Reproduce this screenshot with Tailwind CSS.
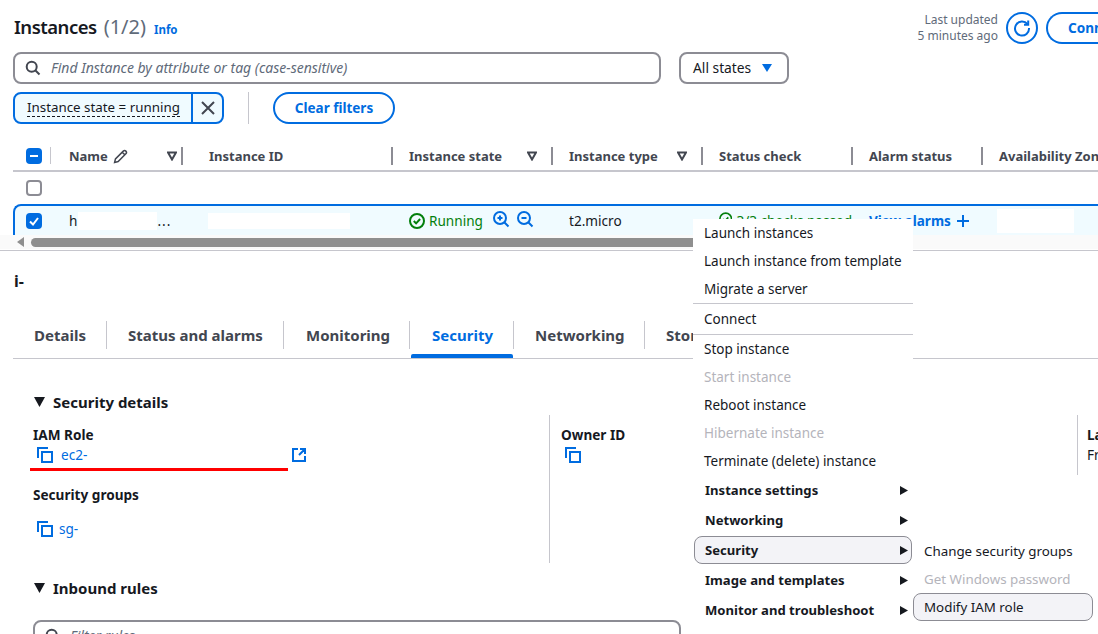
<!DOCTYPE html>
<html lang="en">
<head>
<meta charset="utf-8">
<title>Instances</title>
<script src="https://cdn.jsdelivr.net/npm/@tailwindcss/browser@4"></script>
</head>
<body class="bg-white">
<div class="relative w-[1098px] h-[634px] overflow-hidden bg-white font-['Noto_Sans',sans-serif] text-[14px] leading-[20px] text-[#16191f]">

  <!-- Header -->
  <header class="h-[52px] pl-[14px] flex items-start justify-between">
    <div class="flex items-baseline mt-[13px]">
      <h1 class="text-[18.5px] leading-[28px] font-semibold tracking-[-0.5px] text-[#16191f]">Instances</h1>
      <span class="text-[20px] leading-[28px] text-[#5f6b7a] ml-[7px]">(1/2)</span>
      <a class="text-[11.5px] font-bold text-[#006ce0] ml-[8px]">Info</a>
    </div>
    <div class="flex items-center mt-[12px] w-[178px] shrink-0 justify-end">
      <div class="text-right text-[12px] leading-[16px] text-[#5f6b7a] whitespace-nowrap">Last updated<br>5 minutes ago</div>
      <button class="ml-[8px] w-[32px] h-[32px] rounded-full border-2 border-[#006ce0] flex items-center justify-center shrink-0">
        <svg width="18" height="18" viewBox="0 0 18 18" fill="none" stroke="#006ce0" stroke-width="2"><path d="M14.500 5.200A7 7 0 1 0 16 9"/><path d="M15.200 1.500v4.200h-4.200"/></svg>
      </button>
      <button class="ml-[8px] w-[60px] h-[32px] -mr-[8px] rounded-l-full border-2 border-r-0 border-[#006ce0] text-left pl-[20px] font-bold text-[#006ce0] text-[13.6px] overflow-hidden whitespace-nowrap shrink-0">Connect</button>
    </div>
  </header>

  <!-- Search -->
  <div class="flex items-center pl-[13px] gap-[18px]">
    <div class="w-[648px] h-[32px] rounded-[8px] border-2 border-[#8c8c94] flex items-center pl-[10px]">
      <svg width="16" height="16" viewBox="0 0 16 16" fill="none" stroke="#424650" stroke-width="2"><circle cx="6.700" cy="6.700" r="5"/><path d="M10.500 10.500l4 4"/></svg>
      <span class="ml-[10px] italic text-[#5f6b7a] text-[14px]">Find Instance by attribute or tag (case-sensitive)</span>
    </div>
    <div class="w-[110px] h-[32px] rounded-[8px] border-2 border-[#8c8c94] flex items-center pl-[12px]">
      <span class="text-[#16191f] text-[13.8px]">All states</span>
      <svg class="ml-[10px]" width="12" height="10" viewBox="0 0 12 10"><path d="M1 1h10L6 9z" fill="#006ce0"/></svg>
    </div>
  </div>

  <!-- Filters -->
  <div class="flex items-center pl-[13px] mt-[8px] h-[32px]">
    <div class="w-[211px] h-[32px] rounded-[8px] border-2 border-[#006ce0] bg-[#f0fbff] flex">
      <div class="w-[178px] border-r-2 border-[#006ce0] pl-[12px] flex items-center">
        <span class="border-b border-dashed border-[#16191f] leading-[17px] text-[13.35px] whitespace-nowrap">Instance state = running</span>
      </div>
      <div class="flex-1 flex items-center justify-center">
        <svg width="14" height="14" viewBox="0 0 14 14" stroke="#424650" stroke-width="2"><path d="M1 1l12 12M13 1L1 13"/></svg>
      </div>
    </div>
    <div class="w-px h-[32px] bg-[#c6c6cd] ml-[24px]"></div>
    <button class="ml-[24px] w-[122px] h-[32px] rounded-full border-2 border-[#006ce0] font-bold text-[#006ce0] text-[13.5px]">Clear filters</button>
  </div>

  <!-- Table -->
  <div class="ml-[13px] mt-[16px]">
    <div class="grid grid-cols-[38px_130px_210px_160px_150px_150px_130px_150px] h-[32px] pt-[2px] border-b-2 border-[#c6c6cd] items-center font-bold text-[#424650] text-[13px] whitespace-nowrap">
      <div class="flex items-center pl-[13px] h-[28px] relative">
        <div class="w-[16px] h-[16px] rounded-[4px] bg-[#006ce0] flex items-center justify-center"><div class="w-[8px] h-[2px] bg-white"></div></div>
        <div class="absolute right-0 top-[5px] w-px h-[17px] bg-[#c6c6cd]"></div>
      </div>
      <div class="flex items-center h-[18px] pl-[18px]">
        <span>Name</span>
        <svg class="ml-[5px]" width="15" height="15" viewBox="0 0 14 14" fill="none" stroke="#424650" stroke-width="1.4"><path d="M1.500 12.500l.8-3.300L9.600 2a1.600 1.600 0 0 1 2.400 2.400L4.800 11.700zM8.600 3l2.400 2.400"/></svg>
        <svg class="ml-auto mr-[4px]" width="10" height="10" viewBox="0 0 10 10" fill="none" stroke="#424650" stroke-width="2"><path d="M1 1.500h8L5 8.500z"/></svg>
      </div>
      <div class="h-[18px] flex items-center pl-[26px] border-l-2 border-[#8c8c94]">Instance ID</div>
      <div class="h-[18px] flex items-center pl-[16px] pr-[14px] border-l-2 border-[#8c8c94]">Instance state
        <svg class="ml-auto" width="10" height="10" viewBox="0 0 10 10" fill="none" stroke="#424650" stroke-width="2"><path d="M1 1.500h8L5 8.500z"/></svg>
      </div>
      <div class="h-[18px] flex items-center pl-[16px] pr-[14px] border-l-2 border-[#8c8c94]">Instance type
        <svg class="ml-auto" width="10" height="10" viewBox="0 0 10 10" fill="none" stroke="#424650" stroke-width="2"><path d="M1 1.500h8L5 8.500z"/></svg>
      </div>
      <div class="h-[18px] flex items-center pl-[16px] border-l-2 border-[#8c8c94]">Status check</div>
      <div class="h-[18px] flex items-center pl-[16px] border-l-2 border-[#8c8c94]">Alarm status</div>
      <div class="h-[18px] flex items-center pl-[16px] border-l-2 border-[#8c8c94]">Availability Zone</div>
    </div>
    <div class="h-[32px] flex items-center pl-[13px]">
      <div class="w-[16px] h-[16px] rounded-[4px] border-2 border-[#8c8c94]"></div>
    </div>
    <div class="h-[31px] grid grid-cols-[36px_131px_210px_160px_150px_150px_130px_150px] items-center bg-[#f0fbff] border-t-2 border-l-2 border-[#006ce0] rounded-tl-[8px] whitespace-nowrap text-[13.6px]">
      <div class="pl-[11px]">
        <div class="w-[16px] h-[16px] rounded-[4px] bg-[#006ce0] flex items-center justify-center">
          <svg width="12" height="12" viewBox="0 0 12 12" fill="none" stroke="#fff" stroke-width="2"><path d="M2 6.500l3 3L10 3"/></svg>
        </div>
      </div>
      <div class="pl-[18px] flex items-center"><span>h</span><span class="w-[79px] h-[18px] bg-white ml-[1px]"></span><span class="tracking-[1px]">...</span></div>
      <div class="pl-[26px]"><div class="w-[142px] h-[16px] bg-white"></div></div>
      <div class="pl-[17px] flex items-center text-[#037f0c]">
        <svg width="16" height="16" viewBox="0 0 16 16" fill="none" stroke="#037f0c" stroke-width="2"><circle cx="8" cy="8" r="7"/><path d="M4.800 8l2.300 2.400 4-4.400"/></svg>
        <span class="ml-[4px] mt-[1px]">Running</span>
        <svg class="ml-[10px] -mt-[3px]" width="17" height="17" viewBox="0 0 17 17" fill="none" stroke="#006ce0" stroke-width="2"><circle cx="7" cy="7" r="6"/><path d="M11.500 11.500l4 4M4.500 7h5M7 4.500v5"/></svg>
        <svg class="ml-[7px] -mt-[3px]" width="17" height="17" viewBox="0 0 17 17" fill="none" stroke="#006ce0" stroke-width="2"><circle cx="7" cy="7" r="6"/><path d="M11.500 11.500l4 4M4.500 7h5"/></svg>
      </div>
      <div class="pl-[17px]">t2.micro</div>
      <div class="pl-[17px] flex items-center text-[#037f0c]">
        <svg class="-mt-[3px]" width="16" height="16" viewBox="0 0 16 16" fill="none" stroke="#037f0c" stroke-width="2"><circle cx="8" cy="8" r="7"/><path d="M4.800 8l2.300 2.400 4-4.400"/></svg>
        <span class="ml-[4px]">3/3 checks passed</span>
      </div>
      <div class="pl-[17px] flex items-center font-bold text-[#006ce0] text-[13.5px]">
        <span>View alarms</span>
        <svg class="ml-[6px]" width="12" height="12" viewBox="0 0 12 12" stroke="#006ce0" stroke-width="2"><path d="M0 6h12M6 0v12"/></svg>
      </div>
      <div class="pl-[15px]"><div class="w-[77px] h-[24px] bg-white"></div></div>
    </div>
    <!-- scrollbar -->
    <div class="h-[14px] -ml-[13px] pl-[17px] flex items-center bg-[#fafafa]">
      <svg width="8" height="10" viewBox="0 0 8 10"><path d="M7 0v10L0 5z" fill="#8f8f8f"/></svg>
      <div class="ml-[6px] w-[800px] h-[9px] rounded-full bg-[#8f8f8f]"></div>
    </div>
  </div>
  <div class="h-px mt-[1px] bg-[#c6c6cd]"></div>

  <!-- Detail panel -->
  <div class="pl-[14px] mt-[20px] h-[20px] flex items-center font-bold text-[16px] leading-[20px]">i-</div>

  <nav class="ml-[13px] mt-[24px] h-[44px] border-b border-[#c6c6cd] flex text-[#424650] font-bold text-[15px] whitespace-nowrap">
    <div class="h-[28px] mt-[6px] flex items-center w-[94px] pl-[21px] border-r border-[#c6c6cd] self-start">Details</div>
    <div class="h-[28px] mt-[6px] flex items-center w-[177px] pl-[21px] border-r border-[#c6c6cd] self-start">Status and alarms</div>
    <div class="h-[28px] mt-[6px] flex items-center w-[126px] pl-[22px] border-r border-[#c6c6cd] self-start">Monitoring</div>
    <div class="relative h-[43px] w-[104px] self-start">
      <div class="h-[28px] mt-[6px] flex items-center pl-[22px] border-r border-[#c6c6cd] text-[#006ce0]">Security</div>
      <div class="absolute left-[1px] right-[1px] bottom-0 h-[4px] rounded-t-[2px] bg-[#006ce0]"></div>
    </div>
    <div class="h-[28px] mt-[6px] flex items-center w-[131px] pl-[21px] border-r border-[#c6c6cd] self-start">Networking</div>
    <div class="h-[28px] mt-[6px] flex items-center pl-[21px] self-start">Storage</div>
  </nav>

  <section class="pl-[33px] mt-[33px]">
    <h2 class="h-[20px] flex items-center font-bold text-[15px]">
      <svg width="13" height="10" viewBox="0 0 13 10"><path d="M1 0h11L6.500 10z" fill="#16191f"/></svg>
      <span class="ml-[7px]">Security details</span>
    </h2>
    <div class="flex mt-[3px] h-[148px]">
      <div class="w-[517px] shrink-0 border-r border-[#c6c6cd] pt-[10px] relative">
        <div class="font-bold text-[13.6px] leading-[20px]">IAM Role</div>
        <div class="flex items-center h-[20px] text-[#006ce0] text-[13.6px] relative">
          <svg class="ml-[4px]" width="16" height="16" viewBox="0 0 16 16" fill="none" stroke="#006ce0" stroke-width="2"><path d="M1 11V1h10"/><rect x="5" y="5" width="10" height="10"/></svg>
          <span class="ml-[8px]">ec2-</span>
          <svg class="absolute left-[259px] top-[3px]" width="14" height="14" viewBox="0 0 14 14" fill="none" stroke="#006ce0" stroke-width="2"><path d="M6 1H1v12h12V8M8 1h5v5M13 1L7 7"/></svg>
        </div>
        <div class="absolute left-[-3px] top-[53px] w-[258px] h-[3px] bg-[#ff0000]"></div>
        <div class="font-bold text-[13.6px] leading-[20px] mt-[20px]">Security groups</div>
        <div class="flex items-center h-[20px] mt-[14px] text-[#006ce0] text-[13.6px]">
          <svg class="ml-[4px]" width="16" height="16" viewBox="0 0 16 16" fill="none" stroke="#006ce0" stroke-width="2"><path d="M1 11V1h10"/><rect x="5" y="5" width="10" height="10"/></svg>
          <span class="ml-[6px]">sg-</span>
        </div>
      </div>
      <div class="pl-[11px] w-[527px] shrink-0 h-[60px] pt-[10px]">
        <div class="font-bold text-[13.6px] leading-[20px]">Owner ID</div>
        <svg class="ml-[4px] mt-[2px]" width="16" height="16" viewBox="0 0 16 16" fill="none" stroke="#006ce0" stroke-width="2"><path d="M1 11V1h10"/><rect x="5" y="5" width="10" height="10"/></svg>
      </div>
      <div class="border-l border-[#c6c6cd] h-[60px] pl-[9px] pt-[10px] whitespace-nowrap text-[13.6px] leading-[20px]">
        <div class="font-bold">Launch</div><div>From</div>
      </div>
    </div>
    <h2 class="mt-[15px] h-[20px] flex items-center font-bold text-[15px]">
      <svg width="13" height="10" viewBox="0 0 13 10"><path d="M1 0h11L6.500 10z" fill="#16191f"/></svg>
      <span class="ml-[7px]">Inbound rules</span>
    </h2>
    <div class="mt-[22px] w-[648px] h-[32px] rounded-[8px] border-2 border-[#8c8c94] flex items-center pl-[10px]">
      <svg width="16" height="16" viewBox="0 0 16 16" fill="none" stroke="#424650" stroke-width="2"><circle cx="6.700" cy="6.700" r="5"/><path d="M10.500 10.500l4 4"/></svg>
      <span class="ml-[9px] italic text-[#5f6b7a] text-[14px]">Filter rules</span>
    </div>
  </section>

  <!-- Actions context menu -->
  <div class="absolute left-[693px] top-[219px] w-[220px] h-[415px] bg-white text-[13.5px] text-[#16191f] whitespace-nowrap">
    <div class="h-[28px] pl-[11px] flex items-center">Launch instances</div>
    <div class="h-[28px] pl-[11px] flex items-center">Launch instance from template</div>
    <div class="h-[29px] pl-[11px] flex items-center border-b border-[#c6c6cd]">Migrate a server</div>
    <div class="h-[31px] pl-[11px] flex items-center border-b border-[#c6c6cd]">Connect</div>
    <div class="h-[28px] pl-[11px] flex items-center">Stop instance</div>
    <div class="h-[28px] pl-[11px] flex items-center text-[#b4b4bb]">Start instance</div>
    <div class="h-[28px] pl-[11px] flex items-center">Reboot instance</div>
    <div class="h-[28px] pl-[11px] flex items-center text-[#b4b4bb]">Hibernate instance</div>
    <div class="h-[28px] pl-[11px] flex items-center">Terminate (delete) instance</div>
    <div class="h-[30px] pl-[12px] pr-[5px] flex items-center font-bold text-[13.1px]">Instance settings
      <svg class="ml-auto" width="8" height="9" viewBox="0 0 8 9"><path d="M0 0l8 4.500L0 9z" fill="#16191f"/></svg></div>
    <div class="h-[30px] pl-[12px] pr-[5px] flex items-center font-bold text-[13.1px]">Networking
      <svg class="ml-auto" width="8" height="9" viewBox="0 0 8 9"><path d="M0 0l8 4.500L0 9z" fill="#16191f"/></svg></div>
    <div class="h-[28px] mt-[1px] mb-[1px] mx-[1px] pl-[10px] pr-[3px] flex items-center font-bold text-[13.1px] border border-[#8c8c94] rounded-[8px] bg-[#f3f3f7]">Security
      <svg class="ml-auto" width="8" height="9" viewBox="0 0 8 9"><path d="M0 0l8 4.500L0 9z" fill="#16191f"/></svg></div>
    <div class="h-[30px] pl-[12px] pr-[5px] flex items-center font-bold text-[13.1px]">Image and templates
      <svg class="ml-auto" width="8" height="9" viewBox="0 0 8 9"><path d="M0 0l8 4.500L0 9z" fill="#16191f"/></svg></div>
    <div class="h-[30px] pl-[12px] pr-[5px] flex items-center font-bold text-[13.1px]">Monitor and troubleshoot
      <svg class="ml-auto" width="8" height="9" viewBox="0 0 8 9"><path d="M0 0l8 4.500L0 9z" fill="#16191f"/></svg></div>
  </div>

  <!-- Security submenu -->
  <div class="absolute left-[913px] top-[537px] w-[185px] h-[97px] bg-white text-[13.35px] whitespace-nowrap">
    <div class="h-[28px] pl-[11px] flex items-center">Change security groups</div>
    <div class="h-[28px] pl-[11px] flex items-center text-[#b4b4bb]">Get Windows password</div>
    <div class="h-[28px] w-[180px] pl-[10px] flex items-center border border-[#8c8c94] rounded-[8px] bg-[#f3f3f7]">Modify IAM role</div>
  </div>
</div>
</body>
</html>
